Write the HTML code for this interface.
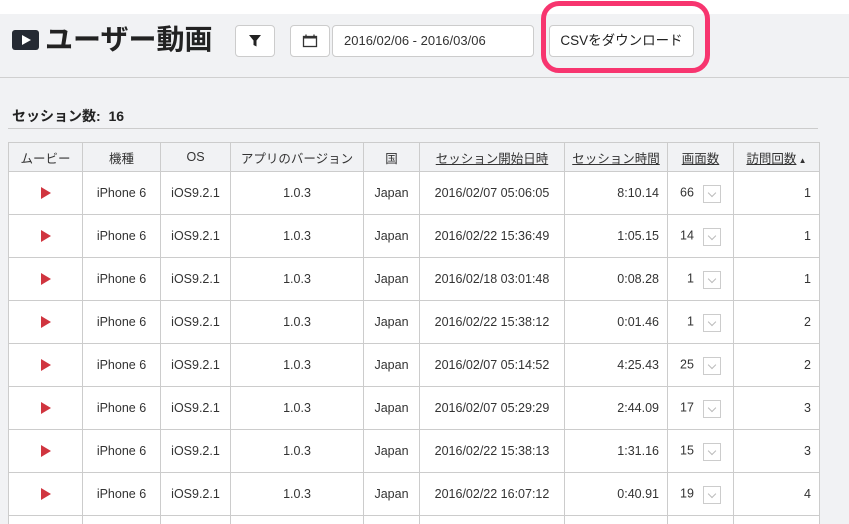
<!DOCTYPE html>
<html><head><meta charset="utf-8"><style>
*{box-sizing:border-box;margin:0;padding:0}
html{width:849px;height:524px;overflow:hidden}
body{width:849px;height:524px;overflow:hidden;background:#fff;font-family:"Liberation Sans","Noto Sans CJK JP",sans-serif;color:#333;position:relative}
.bg{position:absolute;left:0;top:14px;width:849px;height:510px;background:#f1f2f4}
.hline{position:absolute;left:0;top:77px;width:849px;height:1px;background:#d0d0d0}
.title{position:absolute;left:12px;top:23px;font-size:28px;font-weight:bold;color:#222;line-height:34px;display:flex;align-items:center}
.ico{width:27px;height:20px;background:#252a33;border-radius:3px;margin-right:6px;position:relative}
.ico:after{content:"";position:absolute;left:10px;top:5px;border-left:9px solid #fff;border-top:5px solid transparent;border-bottom:5px solid transparent}
.btn{position:absolute;background:#fff;border:1px solid #ccc;border-radius:4px}
.cnt{position:absolute;left:12px;top:106px;font-size:14px;font-weight:bold;color:#222}
.cline{position:absolute;left:8px;top:128px;width:810px;height:1px;background:#ccc}
.wrap{position:absolute;left:8px;top:142px;width:812px;height:382px;overflow:hidden}
table{width:811px;border-collapse:collapse;font-size:12.5px;table-layout:fixed}
td,th{border:1px solid #ccc;text-align:center;font-weight:normal;padding:0 6px;white-space:nowrap}
th{height:29px;background:#f1f2f4;color:#333;padding:0 2px}
td{height:43px;background:#fff}
.r{text-align:right;padding-right:8px}
.n{text-align:left;padding-left:12px}
.sel{display:inline-block;width:18px;height:18px;border:1px solid #ccc;vertical-align:middle;margin-left:9px;position:relative;top:1px}
.sel:after{content:"";position:absolute;left:5px;top:4px;width:5px;height:5px;border-right:1px solid #bbb;border-bottom:1px solid #bbb;transform:rotate(45deg)}
</style></head><body>
<div class="bg"></div>
<div class="title"><span class="ico"></span>ユーザー動画</div>
<div class="btn" style="left:235px;top:25px;width:40px;height:32px">
<svg width="40" height="32" style="position:absolute;left:-1px;top:-1px"><path d="M14 10h12l-4.5 5.5v6l-3 -1.5v-4.5z" fill="#222"/></svg></div>
<div class="btn" style="left:290px;top:25px;width:40px;height:32px">
<svg width="40" height="32" style="position:absolute;left:-1px;top:-1px"><rect x="13.5" y="11.5" width="13" height="10" fill="none" stroke="#333" stroke-width="1.3"/><rect x="13.5" y="11.5" width="13" height="2" fill="#333"/><path d="M16 9.5v3M24 9.5v3" stroke="#333" stroke-width="1.3"/></svg></div>
<div class="btn" style="left:332px;top:25px;width:202px;height:32px;font-size:13px;line-height:30px;padding-left:11px;color:#333">2016/02/06 - 2016/03/06</div>
<div style="position:absolute;left:541px;top:1px;width:169px;height:72px;border:5px solid #f7356f;border-radius:18px"></div>
<div class="btn" style="left:549px;top:25px;width:145px;height:32px;font-size:13.5px;line-height:30px;text-align:center;color:#222">CSVをダウンロード</div>
<div class="hline"></div>
<div class="cnt">セッション数:&nbsp; 16</div>
<div class="cline"></div>
<div class="wrap">
<table>
<colgroup><col style="width:74px"><col style="width:78px"><col style="width:70px"><col style="width:133px"><col style="width:56px"><col style="width:145px"><col style="width:103px"><col style="width:66px"><col style="width:86px"></colgroup>
<tr><th>ムービー</th><th>機種</th><th>OS</th><th>アプリのバージョン</th><th>国</th><th><u>セッション開始日時</u></th><th><u>セッション時間</u></th><th><u>画面数</u></th><th><u>訪問回数</u><span style="font-size:8px"> ▲</span></th></tr>
<tr><td><svg width="10" height="12" style="display:block;margin:0 auto"><path d="M0 0L10 6L0 12z" fill="#d0353f"/></svg></td><td>iPhone 6</td><td>iOS9.2.1</td><td>1.0.3</td><td>Japan</td><td>2016/02/07 05:06:05</td><td class="r">8:10.14</td><td class="n">66<span class="sel"></span></td><td class="r">1</td></tr>
<tr><td><svg width="10" height="12" style="display:block;margin:0 auto"><path d="M0 0L10 6L0 12z" fill="#d0353f"/></svg></td><td>iPhone 6</td><td>iOS9.2.1</td><td>1.0.3</td><td>Japan</td><td>2016/02/22 15:36:49</td><td class="r">1:05.15</td><td class="n">14<span class="sel"></span></td><td class="r">1</td></tr>
<tr><td><svg width="10" height="12" style="display:block;margin:0 auto"><path d="M0 0L10 6L0 12z" fill="#d0353f"/></svg></td><td>iPhone 6</td><td>iOS9.2.1</td><td>1.0.3</td><td>Japan</td><td>2016/02/18 03:01:48</td><td class="r">0:08.28</td><td class="n">&nbsp;&nbsp;1<span class="sel"></span></td><td class="r">1</td></tr>
<tr><td><svg width="10" height="12" style="display:block;margin:0 auto"><path d="M0 0L10 6L0 12z" fill="#d0353f"/></svg></td><td>iPhone 6</td><td>iOS9.2.1</td><td>1.0.3</td><td>Japan</td><td>2016/02/22 15:38:12</td><td class="r">0:01.46</td><td class="n">&nbsp;&nbsp;1<span class="sel"></span></td><td class="r">2</td></tr>
<tr><td><svg width="10" height="12" style="display:block;margin:0 auto"><path d="M0 0L10 6L0 12z" fill="#d0353f"/></svg></td><td>iPhone 6</td><td>iOS9.2.1</td><td>1.0.3</td><td>Japan</td><td>2016/02/07 05:14:52</td><td class="r">4:25.43</td><td class="n">25<span class="sel"></span></td><td class="r">2</td></tr>
<tr><td><svg width="10" height="12" style="display:block;margin:0 auto"><path d="M0 0L10 6L0 12z" fill="#d0353f"/></svg></td><td>iPhone 6</td><td>iOS9.2.1</td><td>1.0.3</td><td>Japan</td><td>2016/02/07 05:29:29</td><td class="r">2:44.09</td><td class="n">17<span class="sel"></span></td><td class="r">3</td></tr>
<tr><td><svg width="10" height="12" style="display:block;margin:0 auto"><path d="M0 0L10 6L0 12z" fill="#d0353f"/></svg></td><td>iPhone 6</td><td>iOS9.2.1</td><td>1.0.3</td><td>Japan</td><td>2016/02/22 15:38:13</td><td class="r">1:31.16</td><td class="n">15<span class="sel"></span></td><td class="r">3</td></tr>
<tr><td><svg width="10" height="12" style="display:block;margin:0 auto"><path d="M0 0L10 6L0 12z" fill="#d0353f"/></svg></td><td>iPhone 6</td><td>iOS9.2.1</td><td>1.0.3</td><td>Japan</td><td>2016/02/22 16:07:12</td><td class="r">0:40.91</td><td class="n">19<span class="sel"></span></td><td class="r">4</td></tr>
<tr><td></td><td></td><td></td><td></td><td></td><td></td><td></td><td></td><td></td></tr>
</table>
</div>
</body></html>
